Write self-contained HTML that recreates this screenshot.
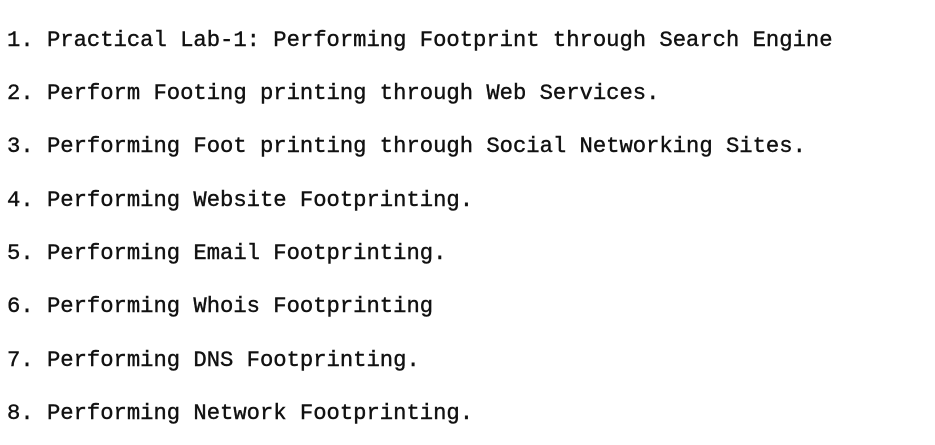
<!DOCTYPE html>
<html><head><meta charset="utf-8"><style>
html,body{margin:0;padding:0;background:#fff;width:935px;height:445px;overflow:hidden}
div{position:absolute;left:7px;font-family:"Liberation Mono",monospace;font-size:22.2px;line-height:26px;color:#111;white-space:pre;-webkit-text-stroke:0.4px #111}
</style></head><body>
<div style="top:28px">1. Practical Lab-1: Performing Footprint through Search Engine</div>
<div style="top:81px">2. Perform Footing printing through Web Services.</div>
<div style="top:134px">3. Performing Foot printing through Social Networking Sites.</div>
<div style="top:188px">4. Performing Website Footprinting.</div>
<div style="top:241px">5. Performing Email Footprinting.</div>
<div style="top:294px">6. Performing Whois Footprinting</div>
<div style="top:348px">7. Performing DNS Footprinting.</div>
<div style="top:401px">8. Performing Network Footprinting.</div>
</body></html>
